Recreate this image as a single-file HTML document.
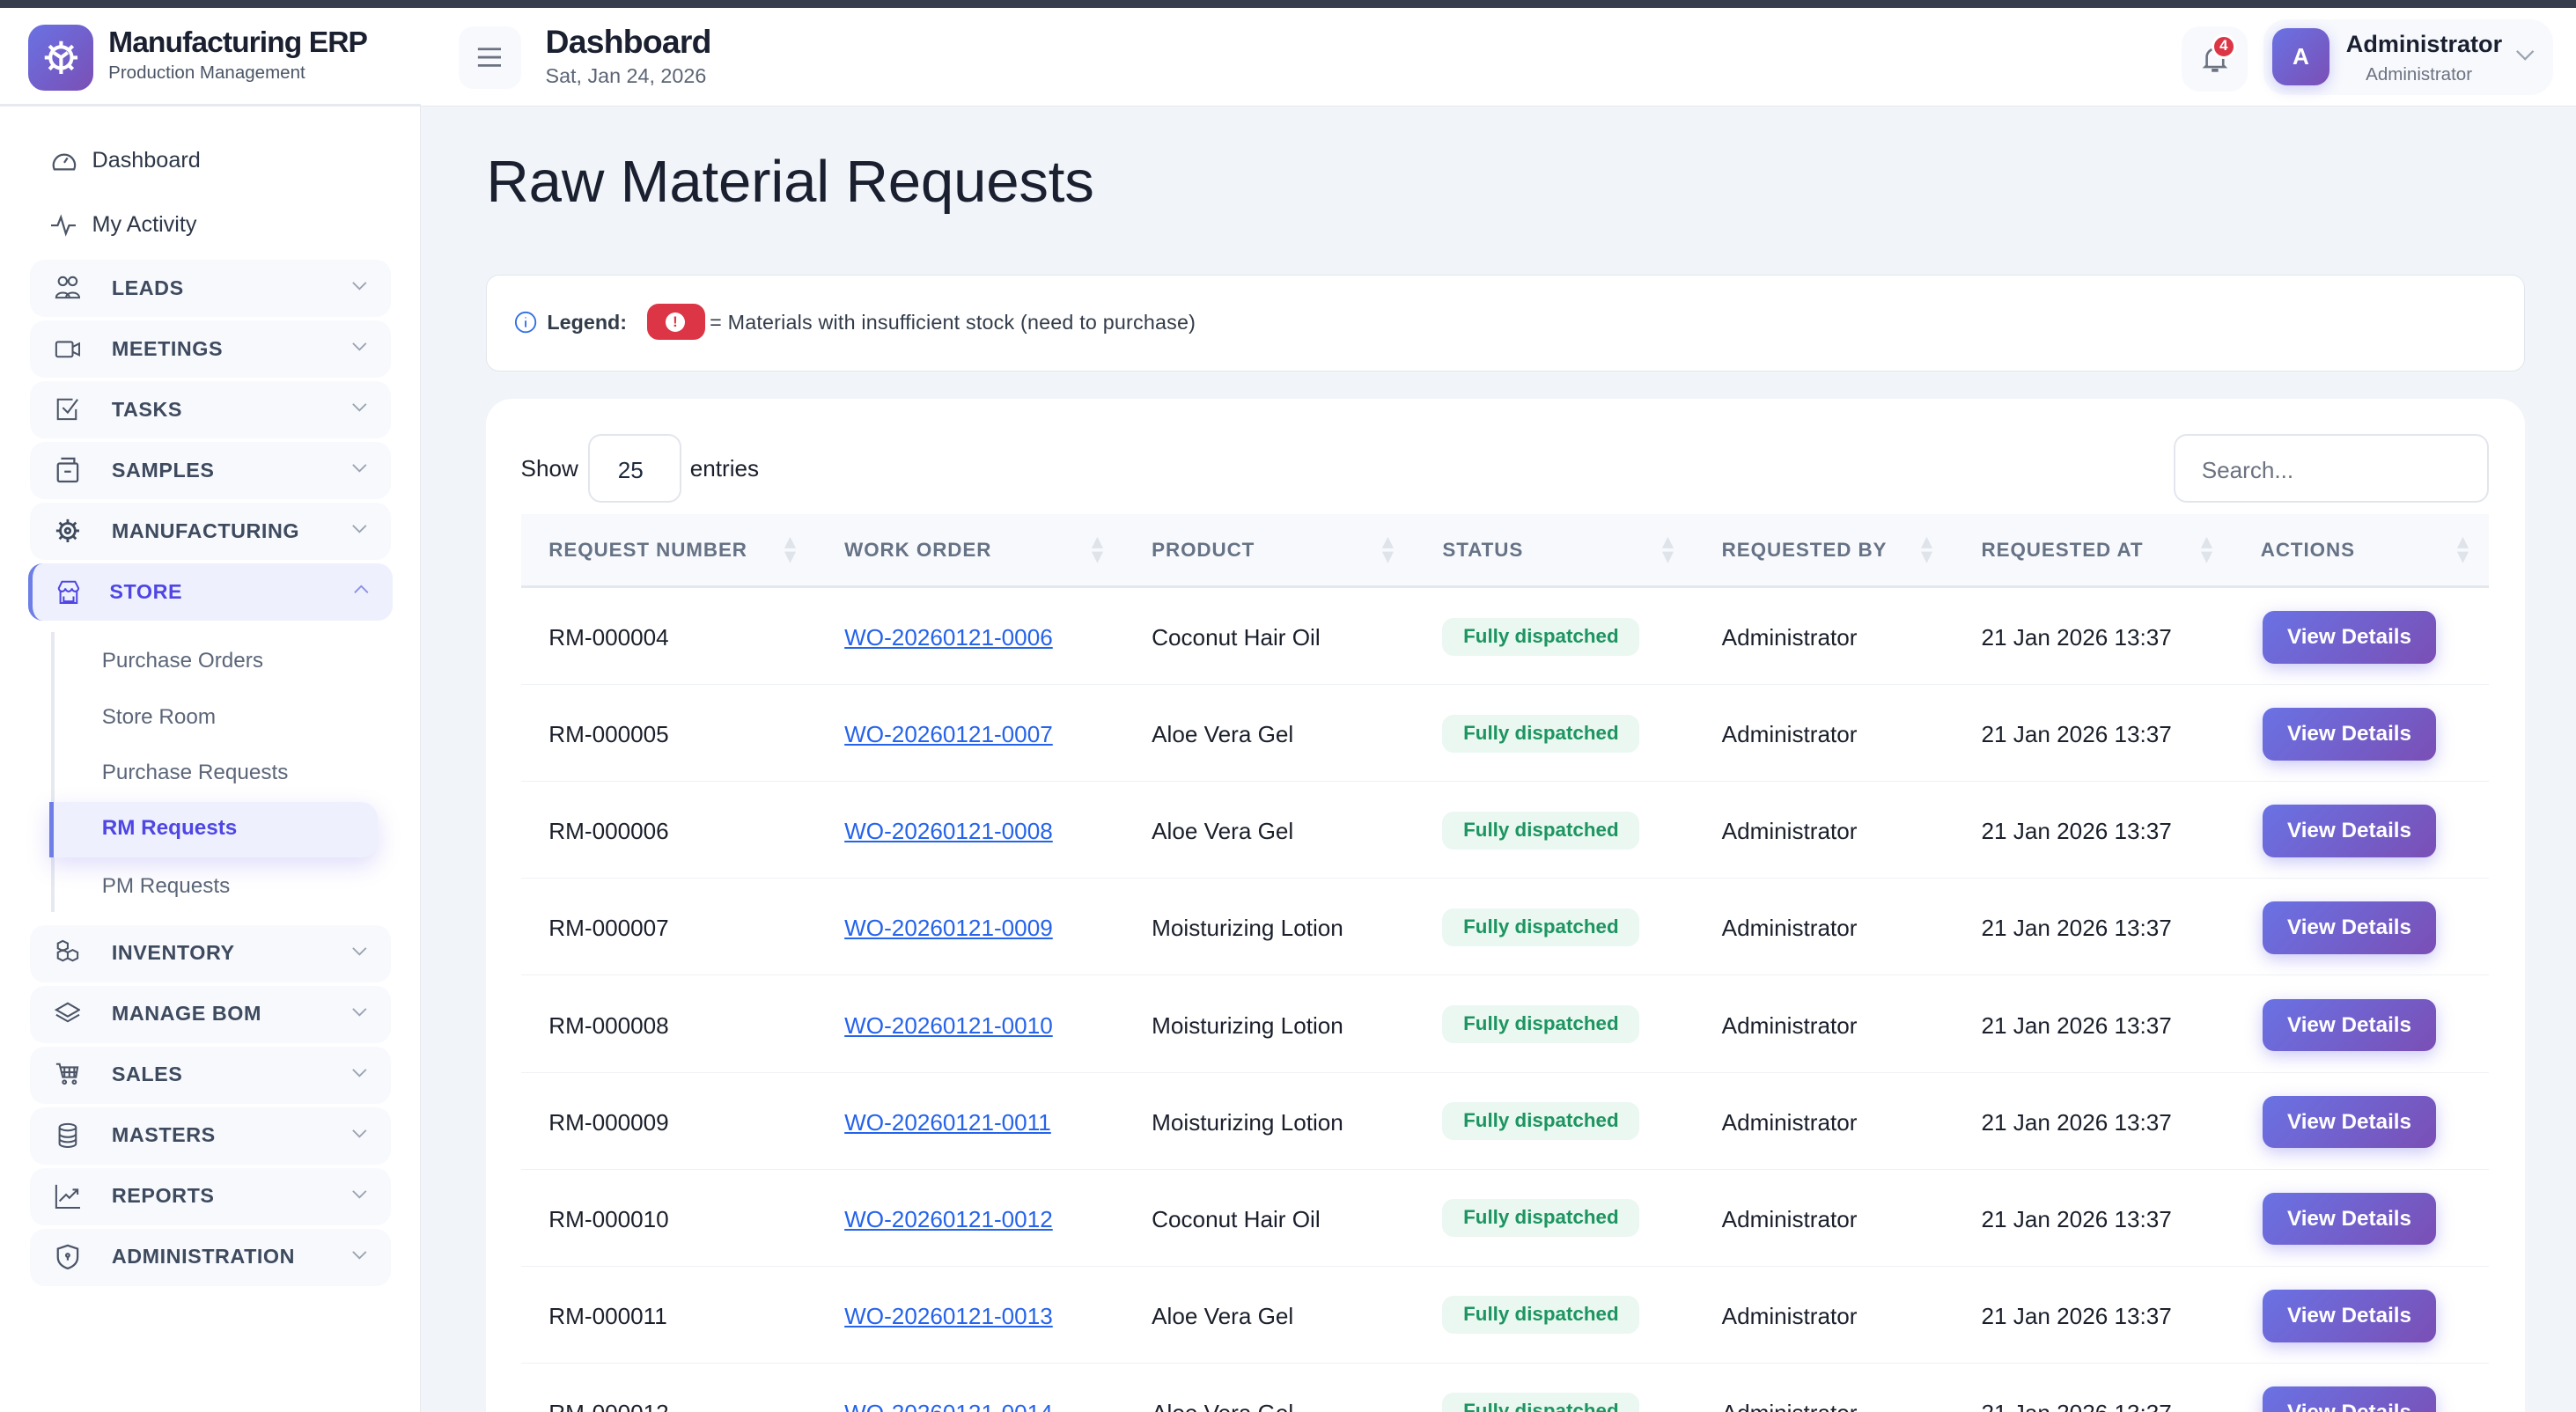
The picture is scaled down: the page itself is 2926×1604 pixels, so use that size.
<!DOCTYPE html>
<html><head><meta charset="utf-8">
<style>
*{box-sizing:border-box;margin:0;padding:0}
html,body{width:2926px;height:1604px;overflow:hidden;background:#f1f4f8}
#root{zoom:1.8661;width:1568px;height:860px;position:relative;font-family:"Liberation Sans",sans-serif;color:#1e293b;overflow:hidden}
.abs{position:absolute}
.topbar{left:0;top:0;width:1568px;height:5px;background:#363e4e}
.side{left:0;top:5px;width:256px;height:855px;background:#fff;border-right:1px solid #e5e8ee}
.hdr{left:256px;top:5px;width:1312px;height:60px;background:#fff;border-bottom:1px solid #e6e9ef}
.brand{left:0;top:5px;width:256px;height:60px;border-bottom:2px solid #e6e9ef;background:#fff}
.logo{left:17px;top:15px;width:40px;height:40px;border-radius:10px;background:linear-gradient(135deg,#6a72e4,#7a4fb5)}
.grp{left:18px;width:220px;height:35px;border-radius:9px;background:#f7f9fd}
.grp .t{position:absolute;left:50px;top:10px;font-size:12.5px;font-weight:bold;letter-spacing:.3px;color:#3e4a5e}
.grp svg.ic{position:absolute;left:15px;top:9px}
.grp .ch{position:absolute;right:14px;top:13px}
.sub{left:62px;font-size:13px;color:#5b6678}
.row{left:317px;width:1198px;height:59px;border-bottom:1px solid #eef1f5}
.c{position:absolute;top:22px;font-size:14px;color:#1a1f2b}
.lnk{color:#2563eb;text-decoration:underline}
.badge{position:absolute;left:561px;top:18px;height:23px;width:120px;border-radius:7px;background:#ebf7f1;color:#1c9560;font-size:12px;font-weight:bold;text-align:center;line-height:23px}
.btn{position:absolute;left:1060px;top:14px;width:106px;height:32px;border-radius:7px;background:linear-gradient(135deg,#6a72e4,#7a4fb5);color:#fff;font-size:13px;font-weight:bold;text-align:center;line-height:32px;box-shadow:0 3px 10px rgba(110,100,230,.35)}
.thd{position:absolute;top:15px;font-size:12px;font-weight:bold;letter-spacing:.5px;color:#667285}
.sort{position:absolute;top:13px;width:8px;height:18px}
</style></head><body><div id="root">
<div class="abs topbar"></div>
<div class="abs side"></div>
<div class="abs brand"></div>
<div class="abs logo"></div>
<svg class="abs" style="left:25px;top:23px" width="24" height="24" viewBox="0 0 24 24" fill="none" stroke="#fff" stroke-width="2.2"><circle cx="12" cy="12" r="6.5"/><path d="M12 2v3M12 19v3M2 12h3M19 12h3M4.9 4.9l2.1 2.1M17 17l2.1 2.1M4.9 19.1L7 17M17 7l2.1-2.1M12 12l4-3M12 12v6M12 12L7.5 9"/></svg>
<div class="abs" style="left:66px;top:16px;font-size:18px;font-weight:bold;letter-spacing:-.5px;color:#1a2030">Manufacturing ERP</div>
<div class="abs" style="left:66px;top:38px;font-size:11px;color:#4b5566">Production Management</div>
<div class="abs hdr"></div>
<div class="abs" style="left:279px;top:16px;width:38px;height:38px;border-radius:9px;background:#f7f9fc"></div>
<svg class="abs" style="left:290px;top:28px" width="16" height="14" viewBox="0 0 16 14" stroke="#6b7280" stroke-width="1.5"><path d="M1 2h14M1 7h14M1 12h14"/></svg>
<div class="abs" style="left:332px;top:14px;font-size:20px;font-weight:bold;letter-spacing:-.4px;color:#1a2030">Dashboard</div>
<div class="abs" style="left:332px;top:39px;font-size:12.5px;color:#5b6575">Sat, Jan 24, 2026</div>
<div class="abs" style="left:1328px;top:16px;width:40px;height:40px;border-radius:11px;background:#f7f9fd"></div>
<svg class="abs" style="left:1340px;top:27px" width="16" height="18" viewBox="0 0 16 18" fill="none" stroke="#6b7280" stroke-width="1.4"><path d="M3 13V8a5 5 0 0110 0v5l1 1H2z"/><path d="M6 16h4" stroke-width="2"/></svg>
<div class="abs" style="left:1346px;top:21px;width:15px;height:15px;border-radius:50%;background:#dc3545;border:2px solid #fff;color:#fff;font-size:9px;font-weight:bold;text-align:center;line-height:11px">4</div>
<div class="abs" style="left:1378px;top:12px;width:176px;height:46px;border-radius:14px;background:#f7f9fd"></div>
<div class="abs" style="left:1383px;top:17px;width:35px;height:35px;border-radius:9px;background:linear-gradient(135deg,#6a72e4,#7a4fb5);color:#fff;font-weight:bold;font-size:14px;text-align:center;line-height:35px;box-shadow:0 2px 8px rgba(110,100,230,.3)">A</div>
<div class="abs" style="left:1428px;top:19px;font-size:14.5px;font-weight:bold;color:#1a2030">Administrator</div>
<div class="abs" style="left:1440px;top:39px;font-size:11px;color:#6b7280">Administrator</div>
<svg class="abs" style="left:1531px;top:30px" width="12" height="8" viewBox="0 0 12 8" fill="none" stroke="#9aa3b0" stroke-width="1.2"><path d="M1 1l5 5 5-5"/></svg>

<svg class="abs" style="left:31px;top:91px" width="16" height="14" viewBox="0 0 16 14" fill="none" stroke="#4b5566" stroke-width="1.2"><path d="M2 12a6.5 6.5 0 1112 0z"/><path d="M8 8l2-3"/></svg>
<div class="abs" style="left:56px;top:90px;font-size:13.5px;color:#2d3748">Dashboard</div>
<svg class="abs" style="left:31px;top:130px" width="16" height="14" viewBox="0 0 16 14" fill="none" stroke="#4b5566" stroke-width="1.2"><path d="M0 7h4l2-5 3 10 2-5h4"/></svg>
<div class="abs" style="left:56px;top:129px;font-size:13.5px;color:#2d3748">My Activity</div>

<div class="abs grp" style="top:158px"><svg class="ic" width="16" height="16" viewBox="0 0 16 16" fill="none" stroke="#4b5566" stroke-width="1.1"><circle cx="5" cy="4" r="2.5"/><circle cx="11" cy="4" r="2.5"/><path d="M1 14c0-4 8-4 8 0zM7 14c0-4 8-4 8 0z"/></svg><span class="t">LEADS</span><svg class="ch" width="10" height="6" viewBox="0 0 10 6" fill="none" stroke="#9aa3b0"><path d="M1 1l4 4 4-4"/></svg></div>
<div class="abs grp" style="top:195px"><svg class="ic" width="16" height="16" viewBox="0 0 16 16" fill="none" stroke="#4b5566" stroke-width="1.1"><rect x="1" y="4" width="10" height="9" rx="1"/><path d="M11 7l4-2v7l-4-2"/></svg><span class="t">MEETINGS</span><svg class="ch" width="10" height="6" viewBox="0 0 10 6" fill="none" stroke="#9aa3b0"><path d="M1 1l4 4 4-4"/></svg></div>
<div class="abs grp" style="top:232px"><svg class="ic" width="16" height="16" viewBox="0 0 16 16" fill="none" stroke="#4b5566" stroke-width="1.1"><path d="M13 8v6H2V2h9"/><path d="M5 7l3 3 6-8"/></svg><span class="t">TASKS</span><svg class="ch" width="10" height="6" viewBox="0 0 10 6" fill="none" stroke="#9aa3b0"><path d="M1 1l4 4 4-4"/></svg></div>
<div class="abs grp" style="top:269px"><svg class="ic" width="16" height="16" viewBox="0 0 16 16" fill="none" stroke="#4b5566" stroke-width="1.2"><rect x="2" y="4" width="12" height="11" rx="1"/><path d="M4 1h8v3M6 9h4"/></svg><span class="t">SAMPLES</span><svg class="ch" width="10" height="6" viewBox="0 0 10 6" fill="none" stroke="#9aa3b0"><path d="M1 1l4 4 4-4"/></svg></div>
<div class="abs grp" style="top:306px"><svg class="ic" width="16" height="16" viewBox="0 0 16 16" fill="none" stroke="#3e4a5e" stroke-width="1.5"><circle cx="8" cy="8" r="4.5"/><circle cx="8" cy="8" r="1.5"/><path d="M8 1v2M8 13v2M1 8h2M13 8h2M3 3l1.4 1.4M11.6 11.6L13 13M3 13l1.4-1.4M11.6 4.4L13 3"/></svg><span class="t">MANUFACTURING</span><svg class="ch" width="10" height="6" viewBox="0 0 10 6" fill="none" stroke="#9aa3b0"><path d="M1 1l4 4 4-4"/></svg></div>
<div class="abs grp" style="top:343px;background:#eef1fd;border-left:3px solid #6d7fe6;left:17px;width:222px"><svg class="ic" width="16" height="16" viewBox="0 0 16 16" fill="none" stroke="#4f46e5" stroke-width="1.1" style="left:14px"><path d="M2 6l2-4h8l2 4c0 1-1 2-2 2s-2-1-2-2c0 1-1 2-2 2s-2-1-2-2c0 1-1 2-2 2s-2-1-2-2zM3 8v7h10V8M5 11v3h6v-3"/></svg><span class="t" style="color:#4f46e5;left:47px">STORE</span><svg class="ch" width="10" height="6" viewBox="0 0 10 6" fill="none" stroke="#8a8fe8"><path d="M1 5l4-4 4 4"/></svg></div>
<div class="abs" style="left:31px;top:385px;width:2px;height:170px;background:#e6e9ef"></div>
<div class="abs sub" style="top:395px">Purchase Orders</div>
<div class="abs sub" style="top:429px">Store Room</div>
<div class="abs sub" style="top:463px">Purchase Requests</div>
<div class="abs" style="left:30px;top:488px;width:200px;height:34px;background:#eef1fd;border-left:3px solid #6d7fe6;border-radius:0 10px 10px 0;box-shadow:0 5px 14px rgba(110,100,230,.22)"></div>
<div class="abs sub" style="top:497px;color:#4f46e5;font-weight:bold">RM Requests</div>
<div class="abs sub" style="top:532px">PM Requests</div>

<div class="abs grp" style="top:563px"><svg class="ic" width="16" height="16" viewBox="0 0 16 16" fill="none" stroke="#4b5566" stroke-width="1.1"><path d="M5 1l3 1.5v3L5 7 2 5.5v-3zM2 8l3-1.5L8 8v3.5L5 13 2 11.5zM8 8l3-1.5L14 8v3.5L11 13 8 11.5z"/></svg><span class="t">INVENTORY</span><svg class="ch" width="10" height="6" viewBox="0 0 10 6" fill="none" stroke="#9aa3b0"><path d="M1 1l4 4 4-4"/></svg></div>
<div class="abs grp" style="top:600px"><svg class="ic" width="16" height="16" viewBox="0 0 16 16" fill="none" stroke="#4b5566" stroke-width="1.1"><path d="M1 6l7-4 7 4-7 4zM1 9l7 4 7-4"/></svg><span class="t">MANAGE BOM</span><svg class="ch" width="10" height="6" viewBox="0 0 10 6" fill="none" stroke="#9aa3b0"><path d="M1 1l4 4 4-4"/></svg></div>
<div class="abs grp" style="top:637px"><svg class="ic" width="16" height="16" viewBox="0 0 16 16" fill="none" stroke="#4b5566" stroke-width="1.1"><path d="M1 2h2l2 8h8l1-6H4M6 4v6M9 4v6M12 4v6M4 7h10"/><circle cx="6" cy="13" r="1"/><circle cx="12" cy="13" r="1"/></svg><span class="t">SALES</span><svg class="ch" width="10" height="6" viewBox="0 0 10 6" fill="none" stroke="#9aa3b0"><path d="M1 1l4 4 4-4"/></svg></div>
<div class="abs grp" style="top:674px"><svg class="ic" width="16" height="16" viewBox="0 0 16 16" fill="none" stroke="#4b5566" stroke-width="1.1"><ellipse cx="8" cy="3" rx="5" ry="2"/><path d="M3 3v10c0 1 2 2 5 2s5-1 5-2V3M3 7c0 1 2 2 5 2s5-1 5-2M3 10c0 1 2 2 5 2s5-1 5-2"/></svg><span class="t">MASTERS</span><svg class="ch" width="10" height="6" viewBox="0 0 10 6" fill="none" stroke="#9aa3b0"><path d="M1 1l4 4 4-4"/></svg></div>
<div class="abs grp" style="top:711px"><svg class="ic" width="16" height="16" viewBox="0 0 16 16" fill="none" stroke="#4b5566" stroke-width="1.1"><path d="M1 1v14h15M3 11l4-4 2 2 5-5M11 4h3v3"/></svg><span class="t">REPORTS</span><svg class="ch" width="10" height="6" viewBox="0 0 10 6" fill="none" stroke="#9aa3b0"><path d="M1 1l4 4 4-4"/></svg></div>
<div class="abs grp" style="top:748px"><svg class="ic" width="16" height="16" viewBox="0 0 16 16" fill="none" stroke="#4b5566" stroke-width="1.2"><path d="M8 1l6 2v5c0 4-3 6-6 7-3-1-6-3-6-7V3z"/><circle cx="8" cy="7" r="1"/><path d="M8 8v2"/></svg><span class="t">ADMINISTRATION</span><svg class="ch" width="10" height="6" viewBox="0 0 10 6" fill="none" stroke="#9aa3b0"><path d="M1 1l4 4 4-4"/></svg></div>

<div class="abs" style="left:296px;top:90px;font-size:36px;letter-spacing:-.1px;color:#1a2030">Raw Material Requests</div>
<div class="abs" style="left:296px;top:167px;width:1241px;height:59px;border:1px solid #e2e6ec;border-radius:8px;background:#fff"></div>
<svg class="abs" style="left:313px;top:189px" width="14" height="14" viewBox="0 0 14 14" fill="none" stroke="#2f6fe4" stroke-width="1"><circle cx="7" cy="7" r="6"/><path d="M7 6v4M7 4v.5"/></svg>
<div class="abs" style="left:333px;top:189px;font-size:12.5px;font-weight:bold;color:#333c4a">Legend:</div>
<div class="abs" style="left:394px;top:185px;width:35px;height:22px;border-radius:7px;background:#dc3545"></div>
<div class="abs" style="left:405px;top:190px;width:12px;height:12px;border-radius:50%;background:#fff;color:#dc3545;font-size:9px;font-weight:bold;text-align:center;line-height:12px">!</div>
<div class="abs" style="left:432px;top:189px;font-size:12.5px;color:#333c4a;letter-spacing:.1px">= Materials with insufficient stock (need to purchase)</div>

<div class="abs" style="left:296px;top:243px;width:1241px;height:640px;border-radius:16px;background:#fff"></div>
<div class="abs" style="left:317px;top:277px;font-size:14px;color:#1a1f2b">Show</div>
<div class="abs" style="left:358px;top:264px;width:57px;height:42px;border:1.5px solid #e2e6ec;border-radius:8px;font-size:14px;padding:13px 0 0 17px">25</div>
<div class="abs" style="left:420px;top:277px;font-size:14px;color:#1a1f2b">entries</div>
<div class="abs" style="left:1323px;top:264px;width:192px;height:42px;border:1.5px solid #e2e6ec;border-radius:8px;font-size:14px;color:#6b7280;padding:13px 0 0 16px">Search...</div>

<div class="abs" style="left:317px;top:313px;width:1198px;height:45px;background:#f7f9fc;border-bottom:2px solid #e3e7ee">
<span class="thd" style="left:17px">REQUEST NUMBER</span><span class="thd" style="left:197px">WORK ORDER</span><span class="thd" style="left:384px">PRODUCT</span><span class="thd" style="left:561px">STATUS</span><span class="thd" style="left:731px">REQUESTED BY</span><span class="thd" style="left:889px">REQUESTED AT</span><span class="thd" style="left:1059px">ACTIONS</span>
<svg class="sort" style="left:160px" viewBox="0 0 8 18" fill="#dfe3ea"><path d="M4 1l3.5 7h-7zM4 17l3.5-7h-7z"/></svg>
<svg class="sort" style="left:347px" viewBox="0 0 8 18" fill="#dfe3ea"><path d="M4 1l3.5 7h-7zM4 17l3.5-7h-7z"/></svg>
<svg class="sort" style="left:524px" viewBox="0 0 8 18" fill="#dfe3ea"><path d="M4 1l3.5 7h-7zM4 17l3.5-7h-7z"/></svg>
<svg class="sort" style="left:694px" viewBox="0 0 8 18" fill="#dfe3ea"><path d="M4 1l3.5 7h-7zM4 17l3.5-7h-7z"/></svg>
<svg class="sort" style="left:852px" viewBox="0 0 8 18" fill="#dfe3ea"><path d="M4 1l3.5 7h-7zM4 17l3.5-7h-7z"/></svg>
<svg class="sort" style="left:1022px" viewBox="0 0 8 18" fill="#dfe3ea"><path d="M4 1l3.5 7h-7zM4 17l3.5-7h-7z"/></svg>
<svg class="sort" style="left:1178px" viewBox="0 0 8 18" fill="#dfe3ea"><path d="M4 1l3.5 7h-7zM4 17l3.5-7h-7z"/></svg>
</div>

<div class="abs row" style="top:358px"><span class="c" style="left:17px">RM-000004</span><span class="c lnk" style="left:197px">WO-20260121-0006</span><span class="c" style="left:384px">Coconut Hair Oil</span><span class="badge">Fully dispatched</span><span class="c" style="left:731px">Administrator</span><span class="c" style="left:889px">21 Jan 2026 13:37</span><span class="btn">View Details</span></div>
<div class="abs row" style="top:417px"><span class="c" style="left:17px">RM-000005</span><span class="c lnk" style="left:197px">WO-20260121-0007</span><span class="c" style="left:384px">Aloe Vera Gel</span><span class="badge">Fully dispatched</span><span class="c" style="left:731px">Administrator</span><span class="c" style="left:889px">21 Jan 2026 13:37</span><span class="btn">View Details</span></div>
<div class="abs row" style="top:476px"><span class="c" style="left:17px">RM-000006</span><span class="c lnk" style="left:197px">WO-20260121-0008</span><span class="c" style="left:384px">Aloe Vera Gel</span><span class="badge">Fully dispatched</span><span class="c" style="left:731px">Administrator</span><span class="c" style="left:889px">21 Jan 2026 13:37</span><span class="btn">View Details</span></div>
<div class="abs row" style="top:535px"><span class="c" style="left:17px">RM-000007</span><span class="c lnk" style="left:197px">WO-20260121-0009</span><span class="c" style="left:384px">Moisturizing Lotion</span><span class="badge">Fully dispatched</span><span class="c" style="left:731px">Administrator</span><span class="c" style="left:889px">21 Jan 2026 13:37</span><span class="btn">View Details</span></div>
<div class="abs row" style="top:594px"><span class="c" style="left:17px">RM-000008</span><span class="c lnk" style="left:197px">WO-20260121-0010</span><span class="c" style="left:384px">Moisturizing Lotion</span><span class="badge">Fully dispatched</span><span class="c" style="left:731px">Administrator</span><span class="c" style="left:889px">21 Jan 2026 13:37</span><span class="btn">View Details</span></div>
<div class="abs row" style="top:653px"><span class="c" style="left:17px">RM-000009</span><span class="c lnk" style="left:197px">WO-20260121-0011</span><span class="c" style="left:384px">Moisturizing Lotion</span><span class="badge">Fully dispatched</span><span class="c" style="left:731px">Administrator</span><span class="c" style="left:889px">21 Jan 2026 13:37</span><span class="btn">View Details</span></div>
<div class="abs row" style="top:712px"><span class="c" style="left:17px">RM-000010</span><span class="c lnk" style="left:197px">WO-20260121-0012</span><span class="c" style="left:384px">Coconut Hair Oil</span><span class="badge">Fully dispatched</span><span class="c" style="left:731px">Administrator</span><span class="c" style="left:889px">21 Jan 2026 13:37</span><span class="btn">View Details</span></div>
<div class="abs row" style="top:771px"><span class="c" style="left:17px">RM-000011</span><span class="c lnk" style="left:197px">WO-20260121-0013</span><span class="c" style="left:384px">Aloe Vera Gel</span><span class="badge">Fully dispatched</span><span class="c" style="left:731px">Administrator</span><span class="c" style="left:889px">21 Jan 2026 13:37</span><span class="btn">View Details</span></div>
<div class="abs row" style="top:830px"><span class="c" style="left:17px">RM-000012</span><span class="c lnk" style="left:197px">WO-20260121-0014</span><span class="c" style="left:384px">Aloe Vera Gel</span><span class="badge">Fully dispatched</span><span class="c" style="left:731px">Administrator</span><span class="c" style="left:889px">21 Jan 2026 13:37</span><span class="btn">View Details</span></div>
</div></body></html>
